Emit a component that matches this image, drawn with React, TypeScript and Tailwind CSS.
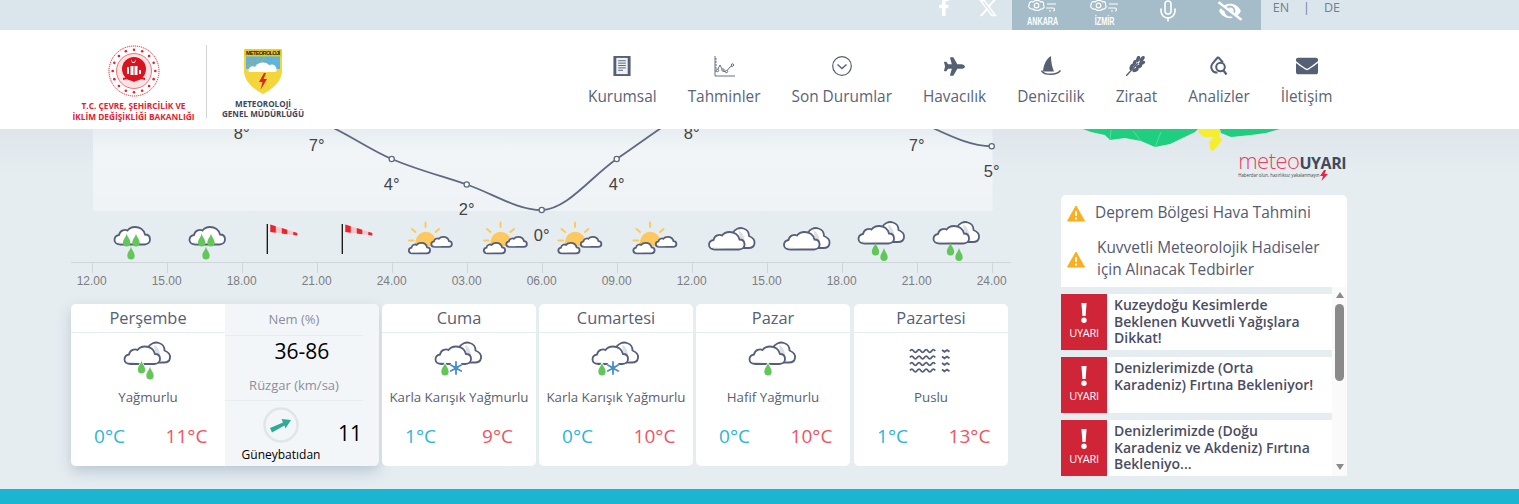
import { FaPlane, FaEnvelope, FaEyeSlash, FaFacebookF } from 'react-icons/fa';
import { FaXTwitter } from 'react-icons/fa6';
import { Mic } from 'lucide-react';

const INK = '#565f7a';
const GREEN = '#62c659';

const temps = [10, 10, 8, 7, 4, 2, 0, 4, 8, 11, 10, 7, 5];
const hours = ['12.00', '15.00', '18.00', '21.00', '24.00', '03.00', '06.00', '09.00', '12.00', '15.00', '18.00', '21.00', '24.00'];
const px = (i: number) => 91.7 + 75 * i;
const py = (t: number) => 210 - 12.75 * t;

function curve() {
  const pts = temps.map((t, i) => [px(i), py(t)]);
  const slope = pts.map((p, i) => {
    if (i === 0 || i === pts.length - 1) return 0;
    const a = pts[i][1] - pts[i - 1][1];
    const b = pts[i + 1][1] - pts[i][1];
    if (a * b <= 0) return 0;
    return (a + b) / 2;
  });
  let d = `M${pts[0][0]} ${pts[0][1]}`;
  for (let i = 1; i < pts.length; i++) {
    d += ` C${pts[i - 1][0] + 25} ${pts[i - 1][1] + slope[i - 1] / 3} ${pts[i][0] - 25} ${pts[i][1] - slope[i] / 3} ${pts[i][0]} ${pts[i][1]}`;
  }
  return d;
}

function Drop({ x, y, halo }: { x: number; y: number; halo?: boolean }) {
  return (
    <path
      transform={`translate(${x} ${y}) scale(1.15)`}
      d="M0 -6.500C.8 -3 3.200 -1.500 3.200 1.600A3.200 3.200 0 0 1 -3.200 1.600C-3.200 -1.500 -.8 -3 0 -6.500Z"
      fill={GREEN}
      stroke={halo ? '#fff' : 'none'}
      strokeWidth={halo ? 1.2 : 0}
      paintOrder="stroke"
    />
  );
}

function Cloud({ x, y, s = 1 }: { x: number; y: number; s?: number }) {
  return (
    <g transform={`translate(${x} ${y}) scale(${s})`}>
      <path d="M6.500 18H30.500C34 18 36 15.500 36 13C36 10 34 8 31 8C30 3.500 26 .5 21 .5C17.500 .5 15 2 13.500 4C11 2.500 6 3.500 5 8.500C2 9 .5 11 .5 13.500C.5 16 3 18 6.500 18Z" fill="#fff" stroke={INK} strokeWidth={1.8 / s} />
      <path d="M3 15.500C8 17 14 16 18 16.600L7 17C5 17 3.800 16.400 3 15.500Z" fill="#d5d8e0" />
    </g>
  );
}

function DoubleCloud({ x, y }: { x: number; y: number }) {
  return (
    <g transform={`translate(${x} ${y})`}>
      <path d="M24 6C26 1.500 31 -.5 35 1C38.500 2 40.500 5 40.500 8.500C44 10 46.500 13 46 16C45.500 19.500 43 20.500 40 20.500H30Z" fill="#fff" stroke={INK} strokeWidth="1.800" />
      <path d="M30 3C34 5 36 9 36 14C37 16 38 18 37 19.500H33Z" fill="#dcdfe5" />
      <Cloud x={0} y={4} />
    </g>
  );
}

function RainSingle({ x }: { x: number }) {
  return (
    <g>
      <Cloud x={x} y={226.500} />
      <Drop x={x + 12.700} y={241} />
      <Drop x={x + 22} y={241} />
      <Drop x={x + 17} y={254} />
    </g>
  );
}

function Windsock({ x }: { x: number }) {
  return (
    <g transform={`translate(${x} 224)`}>
      <path d="M0 0V30" stroke="#111" strokeWidth="1.300" />
      <path d="M3 .5L30 9V11.500L3 8Z" fill="#f3c6d0" />
      <path d="M3 .5L8.500 2.200V8.700L3 8ZM14.500 4L20 5.700V10.200L14.500 9.500ZM26 7.700L30 9V11.500L26 11Z" fill="#e8262a" />
    </g>
  );
}

function SunClouds({ x }: { x: number }) {
  return (
    <g transform={`translate(${x} 221)`}>
      <g stroke="#fdc95f" strokeWidth="2" strokeLinecap="round">
        <path d="M17.500 1.500V6M4 8L7.500 11M31 8L27.500 11M1 19.500H5.500" />
      </g>
      <path d="M7.500 20A10.300 10.300 0 0 1 28 20V25H7.500Z" fill="#fdc95f" />
      <Cloud x={23} y={15.500} s={0.58} />
      <Cloud x={.5} y={21.500} s={0.6} />
    </g>
  );
}

function Flake({ x, y }: { x: number; y: number }) {
  return (
    <g transform={`translate(${x} ${y})`}>
      <circle r="7" fill="#fff" />
      <g stroke="#4a8ec9" strokeWidth="1.800" strokeLinecap="round">
        <path d="M0 -6V6M-5.200 -3L5.200 3M-5.200 3L5.200 -3" />
        <circle r="2.500" fill="#4a8ec9" stroke="none" />
      </g>
    </g>
  );
}

function Haze() {
  const wave = 'q1.800 -2.600 3.600 0t3.600 0t3.600 0t3.600 0t3.600 0t3.600 0t3.600 0';
  const short = 'l2.500 1.800l2.500 -1.800l2.500 1.800';
  return (
    <svg width="44" height="26" viewBox="0 0 44 26" fill="none" stroke={INK} strokeWidth="1.800">
      {[3, 9.500, 16, 22.500].map(y => (
        <g key={y}>
          <path d={`M1 ${y}${wave}`} />
          <path d={`M33 ${y - 1}${short}`} />
        </g>
      ))}
    </svg>
  );
}

function CardIcon({ kind }: { kind: string }) {
  if (kind === 'haze') return <Haze />;
  return (
    <svg width="50" height="40" viewBox="0 0 50 40" className="overflow-visible">
      <DoubleCloud x={1} y={1} />
      {kind === 'rain' && <><Drop x={18.500} y={27} halo /><Drop x={27} y={33} halo /></>}
      {kind === 'sleet' && <><Flake x={22} y={27} /><Drop x={11} y={29} halo /></>}
      {kind === 'drizzle' && <Drop x={20} y={29} halo />}
    </svg>
  );
}

function Chart() {
  return (
    <svg width="940" height="175" viewBox="71 129 940 175" className="block">
      <defs>
        <linearGradient id="plot" x1="0" y1="0" x2="0" y2="1">
          <stop offset="0" stopColor="#e6ecf0" />
          <stop offset="0.25" stopColor="#f1f5f8" />
          <stop offset="1" stopColor="#eff3f6" />
        </linearGradient>
      </defs>
      <rect x="93" y="129" width="899.500" height="82" fill="url(#plot)" />
      <path d={curve()} fill="none" stroke="#5f6a7f" strokeWidth="1.800" />
      {temps.map((t, i) => (
        <g key={i}>
          <circle cx={px(i)} cy={py(t)} r="2.600" fill="#fff" stroke="#5f6a7f" strokeWidth="1.300" />
          {py(t) + 30.500 > 130 && (
            <text x={px(i)} y={py(t) + 30.500} textAnchor="middle" fontSize="16.500" fill="#444" fontFamily="'Liberation Sans', sans-serif">{t}°</text>
          )}
        </g>
      ))}
      <RainSingle x={114} />
      <RainSingle x={189} />
      <Windsock x={267.300} />
      <Windsock x={342.300} />
      <SunClouds x={408} />
      <SunClouds x={483} />
      <SunClouds x={557.500} />
      <SunClouds x={632.500} />
      <DoubleCloud x={708.500} y={227.500} />
      <DoubleCloud x={783.500} y={227.500} />
      <DoubleCloud x={858} y={221.500} />
      <Drop x={875.500} y={250} />
      <Drop x={884} y={255.500} />
      <DoubleCloud x={933} y={221.500} />
      <Drop x={950.500} y={250} />
      <Drop x={959} y={255.500} />
      <path d="M71 262.500H1011" stroke="#cfd5da" />
      {hours.map((h, i) => (
        <g key={i}>
          <path d={`M${Math.round(px(i)) + 0.500} 262V273`} stroke="#cfd5da" />
          <text x={px(i)} y="285" textAnchor="middle" fontSize="12" fill="#7d7d7d" fontFamily="'Liberation Sans', sans-serif">{h}</text>
        </g>
      ))}
    </svg>
  );
}

function Temps({ low, high }: { low: number; high: number }) {
  return (
    <div className="mt-[16px] grid grid-cols-2 text-center text-[19px] leading-[28px]">
      <span className="text-[#2bb6d8]">{low}°C</span>
      <span className="text-[#f0545f]">{high}°C</span>
    </div>
  );
}

function DayColumn({ name, kind, label, low, high }: { name: string; kind: string; label: string; low: number; high: number }) {
  return (
    <div className="w-[154px] shrink-0">
      <div className="h-[29px] border-b border-[#e6edf1] text-center text-[16.400px] leading-[27px] text-[#566074]">{name}</div>
      <div className="flex h-[43px] items-center justify-center pt-[12px]">
        <CardIcon kind={kind} />
      </div>
      <div className="mt-[12px] h-[18px] whitespace-nowrap text-center text-[13.300px] leading-[18px] text-[#5a6070]">{label}</div>
      <Temps low={low} high={high} />
    </div>
  );
}

const days = [
  { name: 'Cuma', kind: 'sleet', label: 'Karla Karışık Yağmurlu', low: 1, high: 9 },
  { name: 'Cumartesi', kind: 'sleet', label: 'Karla Karışık Yağmurlu', low: 0, high: 10 },
  { name: 'Pazar', kind: 'drizzle', label: 'Hafif Yağmurlu', low: 0, high: 10 },
  { name: 'Pazartesi', kind: 'haze', label: 'Puslu', low: 1, high: 13 },
];

function TodayCard() {
  return (
    <div className="flex h-[162px] w-[308px] shrink-0 overflow-hidden rounded-[5px] bg-[#f3f6f8] shadow-[0_6px_14px_rgba(90,120,140,0.3)]">
      <div className="bg-white">
        <DayColumn name="Perşembe" kind="rain" label="Yağmurlu" low={0} high={11} />
      </div>
      <div className="w-[154px] text-center">
        <div className="mr-[16px] h-[32px] border-b border-[#e6edf1] pt-[6px] text-[13px] leading-[18px] text-[#8a8f9d]">Nem (%)</div>
        <div className="text-[21px] leading-[30px] text-black">36-86</div>
        <div className="mr-[16px] mt-[2px] h-[33px] border-b border-[#e6edf1] pt-[8px] text-[13px] leading-[18px] text-[#8a8f9d]">Rüzgar (km/sa)</div>
        <div className="flex">
          <div className="ml-[16px] w-[80px] pt-[6px]">
            <svg width="36" height="36" viewBox="0 0 36 36" className="mx-auto block">
              <circle cx="18" cy="18" r="16.500" fill="#f3f6f8" stroke="#dfe5e8" strokeWidth="2.500" />
              <path d="M7 21L20 15.500L18.500 12L28 13L22.500 21.500L21.500 18.500L9 25.500Z" fill="#2fab96" />
            </svg>
            <div className="mt-[3px] whitespace-nowrap text-[12px] leading-[18px] text-black">Güneybatıdan</div>
          </div>
          <div className="ml-[17px] mt-[18px] text-[21px] leading-[28px] text-black">11</div>
        </div>
      </div>
    </div>
  );
}

function Emblem() {
  const stars = Array.from({ length: 16 }, (_, i) => (i * Math.PI) / 8);
  return (
    <svg width="52" height="52" viewBox="0 0 52 52" className="block">
      <circle cx="26" cy="26" r="25" fill="#fff" stroke="#e2222f" strokeWidth="1" strokeDasharray="1.200 .8" />
      <circle cx="26" cy="26" r="17.500" fill="#fbe3e4" stroke="#e2222f" strokeWidth=".6" />
      {stars.map((a, i) => (
        <circle key={i} cx={26 + 21.300 * Math.cos(a)} cy={26 + 21.300 * Math.sin(a)} r="1.300" fill="#e2222f" />
      ))}
      <circle cx="26" cy="24" r="12" fill="#d9121f" />
      <path d="M20 17a3 3 0 1 0 4 0a2.500 2.500 0 1 1 -4 0Z" fill="#fff" transform="translate(6 -1) scale(.75) translate(4 3)" />
      <path d="M19 29V22H21V29ZM22.500 30V21H25.500V30ZM26.500 30V21H29.500V30ZM31 29V25H33V29Z" fill="#fff" />
      <path d="M15 33Q21 31 26 35Q31 31 37 33L37 35Q31 33 26 37Q21 33 15 35Z" fill="#d9121f" />
    </svg>
  );
}

function Shield() {
  return (
    <svg width="38" height="45" viewBox="0 0 38 45" className="block">
      <path d="M.5 .5H37.500V22C37.500 32 28 40 19 44.500C10 40 .5 32 .5 22Z" fill="#f4d63a" stroke="#f4d63a" />
      <path d="M2 6H36V20H2Z" fill="#5db4dc" />
      <rect x=".5" y=".5" width="37" height="7" fill="#e8c81f" />
      <text x="19" y="6.300" textAnchor="middle" fontSize="5.600" fontWeight="700" fill="#222" fontFamily="'Liberation Sans', sans-serif" textLength="34">METEOROLOJİ</text>
      <path d="M10 16L6 10M14 14L13 8M18 14L20 8M9 18L4 15" stroke="#f29a1f" strokeWidth="1" />
      <path d="M5 23C3 19 8 16 11 18C13 13 22 12 25 16C30 14 34 18 32 23Z" fill="#fff" />
      <path d="M20 24L15 33H18.500L16.500 41L23 30H19.500L22 24Z" fill="#d9262b" />
    </svg>
  );
}

function NavIcon({ name }: { name: string }) {
  const c = '#566074';
  if (name === 'doc')
    return (
      <svg width="18" height="20" viewBox="0 0 18 21">
        <rect width="18" height="21" fill={c} />
        <path d="M3 2H15V19H3Z" fill="#eef1f4" />
        <path d="M5 5H13M5 7.500H13M5 10H13M5 12.500H13M5 15H10" stroke={c} strokeWidth="1" />
      </svg>
    );
  if (name === 'chart')
    return (
      <svg width="21" height="21" viewBox="0 0 21 21" fill="none" stroke={c} strokeWidth=".9">
        <path d="M1 0V20H21M1 3H3M1 6H3M1 9H3M1 12H3M1 15H3" />
        <path d="M3 15L6 9L9 15L12 16L16 11L20 9" />
        <circle cx="3.500" cy="14.500" r="1.200" fill="#fff" />
        <circle cx="9" cy="14" r="1.200" fill="#fff" />
        <circle cx="12.500" cy="15.500" r="1.200" fill="#fff" />
        <circle cx="18.500" cy="9" r="1.200" fill="#fff" />
      </svg>
    );
  if (name === 'status')
    return (
      <svg width="20" height="20" viewBox="0 0 20 20" fill="none" stroke={c} strokeWidth="1.200">
        <circle cx="10" cy="10" r="9.300" />
        <path d="M5.500 8.500L10 12.500L14.500 8.500" strokeWidth="1.400" />
      </svg>
    );
  if (name === 'plane') return <FaPlane size={21} color={c} />;
  if (name === 'boat')
    return (
      <svg width="20" height="21" viewBox="0 0 20 21" fill={c}>
        <path d="M10 0C5 3 2.500 9 2 15.500H13C11 11 10 6 10 0Z" />
        <path d="M.5 14.500C3 19.500 16 19.500 19.500 14.500" fill="none" stroke={c} strokeWidth="1.500" />
      </svg>
    );
  if (name === 'wheat')
    return (
      <svg width="20" height="20" viewBox="0 0 20 20" fill={c}>
        <path d="M0 20L12 7" stroke={c} strokeWidth="1.400" />
        <ellipse cx="16" cy="3" rx="3.500" ry="1.800" transform="rotate(-50 16 3)" />
        <ellipse cx="12" cy="3" rx="3.300" ry="1.800" transform="rotate(-70 12 3)" />
        <ellipse cx="16" cy="7" rx="3.300" ry="1.800" transform="rotate(-20 16 7)" />
        <ellipse cx="8.500" cy="7" rx="3.300" ry="1.800" transform="rotate(-70 8.500 7)" />
        <ellipse cx="13" cy="10.500" rx="3.300" ry="1.800" transform="rotate(-20 13 10.500)" />
        <ellipse cx="5.500" cy="11" rx="3.300" ry="1.800" transform="rotate(-70 5.500 11)" />
        <ellipse cx="9.500" cy="14" rx="3.300" ry="1.800" transform="rotate(-20 9.500 14)" />
      </svg>
    );
  if (name === 'drop')
    return (
      <svg width="18" height="20" viewBox="0 0 18 20" fill="none" stroke={c} strokeWidth="2">
        <path d="M8 1L2.500 7.500C-.5 11.500 2.500 17 7.500 16.500" />
        <path d="M8 1L13 6.500" />
        <circle cx="10.500" cy="11" r="4.300" />
        <path d="M13.500 14.500L16.500 18.500" strokeWidth="2.200" />
      </svg>
    );
  return <FaEnvelope size={22} color={c} />;
}

const nav = [
  ['doc', 'Kurumsal'],
  ['chart', 'Tahminler'],
  ['status', 'Son Durumlar'],
  ['plane', 'Havacılık'],
  ['boat', 'Denizcilik'],
  ['wheat', 'Ziraat'],
  ['drop', 'Analizler'],
  ['mail', 'İletişim'],
];

function CityIcon({ label }: { label: string }) {
  return (
    <div className="flex w-[58px] flex-col items-center">
      <svg width="30" height="15" viewBox="0 0 30 15" fill="none" stroke="#fff" strokeWidth="1.200" className="-mt-[3px] block">
        <path d="M1 5C1 2 3 1 5 2C7 0 11 0 13 2C15 1 16 3 15.500 5C17 7 15 9.500 13 9C11 11 7 11 5 9C2 9.500 0 7 1 5Z" />
        <circle cx="8.500" cy="5.500" r="2.300" />
        <path d="M19 4H28M18 8H25C27 8 27 11 25 11M21 11H23" />
      </svg>
      <span className="mt-[1px] scale-x-[0.72] whitespace-nowrap text-[10px] font-bold leading-[11px] text-white" style={{ fontFamily: "'Liberation Sans', sans-serif" }}>{label}</span>
    </div>
  );
}

function TopBar() {
  return (
    <div className="flex h-[30px] shrink-0 items-start justify-end overflow-hidden bg-[#dbe5ec] pr-[179px]">
      <div className="mr-[25px]">
        <FaFacebookF size={18} color="#fff" className="-mt-[2px]" />
      </div>
      <div className="mr-[14px]">
        <FaXTwitter size={20} color="#fff" className="-mt-[2px]" />
      </div>
      <div className="flex h-[30px] w-[249px] items-start bg-[#a5bcc9] pl-[2px] pt-[3px]">
        <CityIcon label="ANKARA" />
        <div className="ml-[4px]"><CityIcon label="İZMİR" /></div>
        <Mic size={24} color="#fff" strokeWidth={1.600} className="ml-[22px] -mt-[4px]" />
        <FaEyeSlash size={24} color="#fff" className="ml-[38px] -mt-[4px]" />
      </div>
      <div className="ml-[12px] flex text-[12.500px] leading-[16px] text-[#6f7f94]">
        <span>EN</span>
        <span className="ml-[14px]">|</span>
        <span className="ml-[14px]">DE</span>
      </div>
    </div>
  );
}

function Header() {
  return (
    <header className="z-10 flex h-[99px] shrink-0 bg-white">
      <div className="ml-[71px] flex w-[517px] shrink-0">
        <div className="flex w-[125px] flex-col items-center pt-[15px]">
          <Emblem />
          <div className="mt-[3px] whitespace-nowrap text-center text-[8.300px] font-bold leading-[11px] text-[#e2222f]">
            T.C. ÇEVRE, ŞEHİRCİLİK VE<br />İKLİM DEĞİŞİKLİĞİ BAKANLIĞI
          </div>
        </div>
        <div className="ml-[10px] mt-[15px] h-[73px] w-px bg-[#d5d5d5]" />
        <div className="ml-[14px] flex w-[84px] flex-col items-center pt-[19px]">
          <Shield />
          <div className="mt-[5px] whitespace-nowrap text-center text-[8.100px] font-bold leading-[10px] text-[#40465c]">
            METEOROLOJİ<br />GENEL MÜDÜRLÜĞÜ
          </div>
        </div>
      </div>
      <nav className="flex gap-[31px] pt-[25px]">
        {nav.map(([icon, label]) => (
          <div key={label} className="flex flex-col items-center">
            <div className="flex h-[22px] items-center"><NavIcon name={icon} /></div>
            <div className="mt-[10px] whitespace-nowrap text-[15.400px] leading-[20px] text-[#5a6478]">{label}</div>
          </div>
        ))}
      </nav>
    </header>
  );
}

function MapPiece() {
  return (
    <div className="h-[66px]">
      <svg width="286" height="44" viewBox="0 0 286 44" className="block">
        <path d="M22 0L30 3L44 6L49 11L64 9L80 12L94 18L109 15L134 3L137 0Z" fill="#1fcf7f" />
        <path d="M137 0H160L158 7L161 11L157 17L152 22L149 20L148 13L153 8L143 8L138 4Z" fill="#f4ee2e" />
        <path d="M159 0H219L205 4L190 6L170 8L160 4Z" fill="#1fcf7f" />
        <path d="M50 1L49 11M72 2L80 12M100 3L94 18" stroke="#7de3b3" strokeWidth=".6" fill="none" />
      </svg>
      <div className="-mt-[23px] flex justify-end pr-[1px]">
        <div className="relative">
          <div className="flex items-baseline whitespace-nowrap leading-[20px]">
            <span className="text-[22px] font-light tracking-[-0.5px] text-[#e8405e]">meteo</span>
            <span className="text-[16px] font-bold tracking-[-0.5px] text-[#414a5c]">UYARI</span>
          </div>
          <div className="-mt-[1px] whitespace-nowrap text-[4.400px] leading-[6px] text-[#444]">Haberdar olun, hazırlıksız yakalanmayın</div>
          <svg width="8" height="11" viewBox="0 0 8 11" className="absolute bottom-[-3px] left-[82px]">
            <path d="M4 0L0 6H3L1.500 11L8 4H4.500L6 0Z" fill="#e8263f" />
          </svg>
        </div>
      </div>
    </div>
  );
}

function WarnIcon() {
  return (
    <svg width="18" height="17" viewBox="0 0 18 17" className="block shrink-0">
      <path d="M9 1L17.500 16H.5Z" fill="#fcae1e" stroke="#fcae1e" strokeLinejoin="round" />
      <path d="M9 6V11M9 12.500V14.500" stroke="#fff" strokeWidth="2" />
    </svg>
  );
}

const alerts = [
  'Kuzeydoğu Kesimlerde Beklenen Kuvvetli Yağışlara Dikkat!',
  'Denizlerimizde (Orta Karadeniz) Fırtına Bekleniyor!',
  'Denizlerimizde (Doğu Karadeniz ve Akdeniz) Fırtına Bekleniyo...',
];

function AlertRow({ text }: { text: string }) {
  return (
    <div className="flex h-[56px] bg-white">
      <div className="flex w-[46px] shrink-0 flex-col items-center bg-[#cf2536] text-white">
        <svg width="6" height="20" viewBox="0 0 6 20" className="mt-[9px] block">
          <path d="M.4 0H5.600L4.600 13H1.400Z" fill="#fff" />
          <circle cx="3" cy="17.300" r="2.700" fill="#fff" />
        </svg>
        <span className="mt-[3px] text-[11px] leading-[13px] tracking-[-0.3px]">UYARI</span>
      </div>
      <div className="w-[216px] pl-[7px] pt-[3px] text-[14px] font-semibold leading-[16.500px] text-[#4a4d63]">{text}</div>
    </div>
  );
}

function Sidebar() {
  return (
    <aside className="ml-[50px] w-[286px] shrink-0">
      <MapPiece />
      <div className="flex h-[36px] items-center gap-[10px] rounded-t-[5px] bg-white pl-[6px] text-[15.400px] text-[#555a70]">
        <WarnIcon />
        <span className="whitespace-nowrap">Deprem Bölgesi Hava Tahmini</span>
      </div>
      <div className="flex h-[56px] items-center gap-[12px] bg-white pl-[6px] text-[15.400px] leading-[22px] text-[#555a70]">
        <WarnIcon />
        <span className="whitespace-nowrap">Kuvvetli Meteorolojik Hadiseler<br />için Alınacak Tedbirler</span>
      </div>
      <div className="flex h-[189px]">
        <div className="flex w-[271px] flex-col gap-[7px] pt-[7px]">
          {alerts.map(a => <AlertRow key={a} text={a} />)}
        </div>
        <div className="flex w-[15px] flex-col items-center bg-[#fafafa] pt-[5px]">
          <div className="h-0 w-0 border-x-[4.500px] border-b-[6px] border-x-transparent border-b-[#8a8a8a]" />
          <div className="mt-[6px] h-[77px] w-[9px] rounded-[5px] bg-[#8a8a8a]" />
          <div className="mt-[83px] h-0 w-0 border-x-[4.500px] border-t-[6px] border-x-transparent border-t-[#8a8a8a]" />
        </div>
      </div>
    </aside>
  );
}

export default function App() {
  return (
    <div className="flex h-[504px] w-[1519px] flex-col overflow-hidden bg-[#e6edf1]" style={{ fontFamily: "'Open Sans', sans-serif" }}>
      <TopBar />
      <Header />
      <main className="flex h-[360px] shrink-0 bg-gradient-to-b from-[#dfe6eb] to-[#e6edf1] to-[12%]">
        <div className="ml-[71px] w-[940px] shrink-0">
          <Chart />
          <div className="flex gap-[3px]">
            <TodayCard />
            {days.map((d, i) => (
              <div key={d.name} className={i === 3 ? 'ml-px h-[162px] overflow-hidden rounded-[5px] bg-white' : 'h-[162px] overflow-hidden rounded-[5px] bg-white'}>
                <DayColumn {...d} />
              </div>
            ))}
          </div>
        </div>
        <Sidebar />
      </main>
      <footer className="h-[15px] shrink-0 bg-[#1cb5d1]" />
    </div>
  );
}
